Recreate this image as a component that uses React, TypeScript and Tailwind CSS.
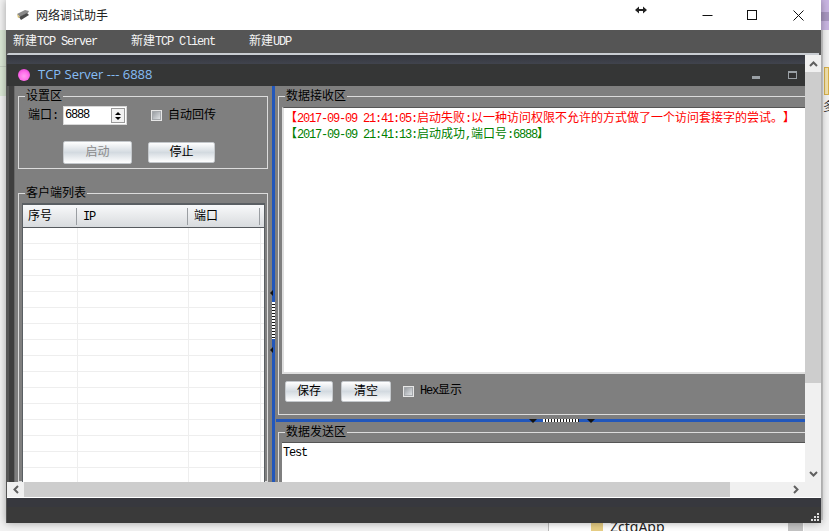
import React from 'react';

const Lat = ({ children }: { children: React.ReactNode }) => (
  <span className="text-[12px] tracking-[-1.2px]">{children}</span>
);

const Legend = ({ children }: { children: React.ReactNode }) => (
  <legend className="ml-[6px] px-[1px] pt-[2px] text-[12px] leading-[16px] text-black">{children}</legend>
);

const WinButton = ({ children, className }: { children: React.ReactNode; className: string }) => (
  <div className={`flex items-center justify-center rounded-[2px] border border-[#c4c8cc] bg-linear-to-b from-white via-[#d3dae0] to-white text-[12px] text-black ${className}`}>
    {children}
  </div>
);

const CheckBox = () => (
  <div className="flex h-[11px] w-[11px] items-center justify-center border border-[#e6e6e6] bg-[#a5a8ac]">
    <div className="h-[7px] w-[7px] bg-linear-to-br from-[#9a9ea3] to-[#dfe2e5]" />
  </div>
);

const rows = Array.from({ length: 16 });

export default function App() {
  return (
    <div className="relative h-[531px] w-[829px] overflow-hidden bg-[#f2f2f2] font-['Liberation_Mono','Noto_Sans_CJK_SC',monospace] text-[12px] [text-spacing-trim:space-all]">
      {/* desktop behind the window */}
      <div className="absolute left-0 top-[30px] h-[66px] w-[6px] bg-[#dbe8d5]" />
      <div className="absolute left-0 top-[66px] h-px w-[6px] bg-[#c8d2c4]" />
      <div className="absolute right-0 top-0 h-[30px] w-[8px] bg-[#c9b5e2]" />
      <div className="absolute right-0 top-[12px] h-[9px] w-[8px] bg-[#a896c0]" />
      <div className="absolute left-[821px] top-[30px] h-[490px] w-[2px] bg-[#cfcfcf]" />
      <div className="absolute right-0 top-[67px] h-[28px] w-[5px] border border-[#d8b14a] bg-[#f1e2ae]" />
      <div className="absolute right-0 top-[99px] w-[6px] overflow-hidden text-[12px] text-[#333]">多</div>
      <div className="absolute left-[548px] top-[523px] h-[8px] w-px bg-[#bbb]" />
      <div className="absolute left-[549px] top-[523px] h-[8px] w-[255px] bg-white" />
      <div className="absolute left-[788px] top-[523px] h-[8px] w-[15px] bg-[#c4c4c4]" />
      <div className="absolute left-[591px] top-[523px] h-[8px] w-[12px] bg-[#e8cf85]" />
      <div className="absolute left-[610px] top-[516px] font-['Noto_Sans',sans-serif] text-[14px] text-[#222]">ZctqApp</div>

      {/* main window */}
      <div className="absolute left-[6px] top-0 flex h-[523px] w-[815px] flex-col bg-[#555] shadow-[0_0_8px_rgba(0,0,0,0.35)]">
        <div className="flex h-[30px] items-center bg-white">
          <svg width="14" height="12" viewBox="0 0 14 12" className="ml-[10px]">
            <path d="M1 5 L9 1 L13 2 L12 4 L4 8 Z" fill="#8a8a8a" />
            <path d="M3 8 L11 4 L13 6 L5 11 Z" fill="#4a4a4a" />
            <path d="M1 5 L4 8 L2 9 Z" fill="#d8c070" />
          </svg>
          <span className="ml-[6px] font-['Noto_Sans_CJK_SC',sans-serif] text-[12px] text-[#222]">网络调试助手</span>
          <div className="flex-1" />
          <svg width="12" height="8" viewBox="0 0 12 8" className="mb-[10px] mr-[55px]">
            <path d="M0 4 L4 0.5 V3 H8 V0.5 L12 4 L8 7.5 V5 H4 V7.5 Z" fill="#222" />
          </svg>
          <svg width="11" height="11" viewBox="0 0 11 11" className="mr-[34px]">
            <path d="M0.5 5.5 H10.5" stroke="#111" />
          </svg>
          <svg width="10" height="10" viewBox="0 0 10 10" className="mr-[36px]">
            <rect x="0.5" y="0.5" width="9" height="9" fill="none" stroke="#111" />
          </svg>
          <svg width="11" height="11" viewBox="0 0 11 11" className="mr-[17px]">
            <path d="M0.5 0.5 L10.5 10.5 M10.5 0.5 L0.5 10.5" stroke="#111" />
          </svg>
        </div>

        <div className="flex h-[23px] items-center bg-[#555] pl-[7px] text-[#f4f4f4]">
          <span className="w-[118px]">新建<Lat>TCP Server</Lat></span>
          <span className="w-[118px]">新建<Lat>TCP Client</Lat></span>
          <span>新建<Lat>UDP</Lat></span>
        </div>

        <div className="ml-px h-[2px] w-[812px] rounded-tl-[4px] bg-[#c9cdd2]" />

        <div className="flex h-[427px]">
          {/* mdi child window */}
          <div className="ml-px flex w-[798px] flex-col overflow-hidden bg-[#7f7f7f]">
            <div className="h-[9px] shrink-0 bg-linear-to-b from-[#34363d] to-[#41444e]" />
            <div className="flex h-[22px] shrink-0 items-center bg-[#353636]">
              <div className="ml-[11px] h-[12px] w-[12px] rounded-full bg-[radial-gradient(circle_at_50%_60%,#ff9cf0,#ff70ea_45%,#e030d0)]" />
              <span className="ml-[8px] font-['Open_Sans',sans-serif] text-[13px] text-[#86bdf5]">TCP Server --- 6888</span>
              <div className="flex-1" />
              <div className="mr-[28px] mt-[4px] h-[3px] w-[8px] bg-[#9aa0a5]" />
              <div className="mr-[8px] h-[8px] w-[9px] border border-t-2 border-[#9aa0a5] bg-[#333]" />
            </div>

            <div className="flex min-h-0 flex-1">
              <div className="flex w-[8px] shrink-0">
                <div className="w-[2px] bg-[#555]" />
                <div className="w-[5px] bg-[#3f3f3f]" />
                <div className="w-px bg-[#6a6a6a]" />
              </div>

              {/* left pane */}
              <div className="flex w-[256px] shrink-0 flex-col overflow-hidden pl-[3px] pr-[3px] pt-px">
                <fieldset className="h-[82px] shrink-0 border border-[#dcdcdc]">
                  <Legend>设置区</Legend>
                  <div className="mt-[1px] flex h-[19px] items-center pl-[9px]">
                    <span className="w-[35px] text-black">端口:</span>
                    <div className="flex h-[19px] w-[64px] items-center justify-between border border-[#d8d8d8] bg-white pl-[1px] pr-px">
                      <span className="-mt-[2px]"><Lat>6888</Lat></span>
                      <div className="flex h-[15px] w-[14px] flex-col items-center justify-center gap-[2px] border border-[#9a9a9a] bg-[#f2f2f2]">
                        <div className="h-0 w-0 border-x-[3px] border-b-[3px] border-x-transparent border-b-black" />
                        <div className="h-0 w-0 border-x-[3px] border-t-[3px] border-x-transparent border-t-black" />
                      </div>
                    </div>
                    <div className="ml-[24px] mr-[6px]"><CheckBox /></div>
                    <span className="text-black">自动回传</span>
                  </div>
                  <div className="mt-[16px] flex items-center pl-[44px]">
                    <WinButton className="h-[23px] w-[69px] border-[#a8adb2] from-[#a9aeb3] via-[#c3c8cc] to-[#a9aeb3] text-[#8a8a8a]!">启动</WinButton>
                    <WinButton className="ml-[16px] h-[21px] w-[67px]">停止</WinButton>
                  </div>
                </fieldset>

                <fieldset className="mt-[15px] min-h-0 flex-1 border border-[#dcdcdc]">
                  <Legend>客户端列表</Legend>
                  <div className="ml-[3px] mr-[2px] mt-px h-[400px] border-x border-t-2 border-[#5a5f63] bg-white">
                    <div className="flex h-[23px] items-center border-b border-[#55595d] bg-linear-to-b from-[#f8f9fa] to-[#d8dbde] text-black">
                      <div className="h-[17px] w-[54px] border-r border-[#9a9ea2] pl-[5px]">序号</div>
                      <div className="h-[17px] w-[111px] border-r border-[#9a9ea2] pl-[6px]"><Lat>IP</Lat></div>
                      <div className="h-[17px] w-[72px] border-r border-[#9a9ea2] pl-[6px]">端口</div>
                    </div>
                    {rows.map((_, i) => (
                      <div key={i} className="flex h-[16px] border-b border-[#eeeeee]">
                        <div className="w-[55px] border-r border-[#eeeeee]" />
                        <div className="w-[111px] border-r border-[#eeeeee]" />
                        <div className="w-[72px] border-r border-[#eeeeee]" />
                      </div>
                    ))}
                  </div>
                </fieldset>
              </div>

              {/* vertical splitter */}
              <div className="flex w-[5px] shrink-0 flex-col items-start bg-[#7f7f7f]">
                <div className="relative ml-px h-full w-[3px] bg-[#2257bb]">
                  <div className="absolute -left-[2px] top-[204px] h-0 w-0 border-y-[3px] border-r-[3px] border-y-transparent border-r-[#111]" />
                  <div className="absolute left-0 top-[216px] h-[37px] w-[3px] bg-[repeating-linear-gradient(to_bottom,#fff_0,#fff_2px,#111_2px,#111_3px)]" />
                  <div className="absolute -left-[2px] top-[261px] h-0 w-0 border-y-[3px] border-r-[3px] border-y-transparent border-r-[#111]" />
                </div>
              </div>

              {/* right pane */}
              <div className="flex min-w-0 flex-1 flex-col overflow-hidden">
                <div className="h-[333px] shrink-0 pl-[2px] pt-px">
                  <fieldset className="-mr-[10px] h-[328px] border border-[#dcdcdc]">
                    <Legend>数据接收区</Legend>
                    <div className="ml-[3px] mt-[2px] h-[267px] border-b-2 border-l-2 border-t border-[#dedede] border-t-[#555] bg-white pl-px pt-[3px] leading-[16px]">
                      <div className="whitespace-nowrap text-[#f00]">【<Lat>2017-09-09 21:41:05:</Lat>启动失败<Lat>:</Lat>以一种访问权限不允许的方式做了一个访问套接字的尝试。】</div>
                      <div className="whitespace-nowrap text-[#008000]">【<Lat>2017-09-09 21:41:13:</Lat>启动成功<Lat>,</Lat>端口号<Lat>:6888</Lat>】</div>
                    </div>
                    <div className="mt-[7px] flex items-center pl-[6px]">
                      <WinButton className="h-[21px] w-[48px]">保存</WinButton>
                      <WinButton className="ml-[8px] h-[21px] w-[50px]">清空</WinButton>
                      <div className="ml-[12px] mr-[6px]"><CheckBox /></div>
                      <span className="-mt-[2px] text-black"><Lat>Hex</Lat>显示</span>
                    </div>
                  </fieldset>
                </div>

                {/* horizontal splitter */}
                <div className="relative h-[3px] shrink-0 bg-[#2257bb]">
                  <div className="absolute left-[253px] top-0 h-0 w-0 border-x-[4px] border-t-[4px] border-x-transparent border-t-[#111]" />
                  <div className="absolute left-[267px] top-0 h-[3px] w-[36px] bg-[repeating-linear-gradient(to_right,#fff_0,#fff_2px,#111_2px,#111_3px)]" />
                  <div className="absolute left-[311px] top-0 h-0 w-0 border-x-[4px] border-t-[4px] border-x-transparent border-t-[#111]" />
                </div>

                <div className="min-h-0 flex-1 pl-[2px] pt-px">
                  <fieldset className="-mr-[10px] h-[100px] border border-[#dcdcdc]">
                    <Legend>数据发送区</Legend>
                    <div className="ml-[3px] mt-px h-[80px] border-t border-[#555] bg-white pl-px pt-px text-black">
                      <Lat>Test</Lat>
                    </div>
                  </fieldset>
                </div>
              </div>
            </div>
          </div>

          {/* vertical scrollbar */}
          <div className="flex w-[16px] flex-col items-center bg-[#f0f0f0]">
            <div className="flex h-[17px] items-center">
              <svg width="9" height="6" viewBox="0 0 9 6"><path d="M1 5 L4.5 1.5 L8 5" fill="none" stroke="#606060" strokeWidth="2" /></svg>
            </div>
            <div className="h-[311px] w-full bg-[#cdcdcd]" />
            <div className="flex-1" />
            <div className="flex h-[17px] items-center">
              <svg width="9" height="6" viewBox="0 0 9 6"><path d="M1 1 L4.5 4.5 L8 1" fill="none" stroke="#606060" strokeWidth="2" /></svg>
            </div>
          </div>
        </div>

        {/* horizontal scrollbar */}
        <div className="ml-px flex h-[15px] items-center bg-[#f0f0f0]">
          <div className="flex w-[17px] justify-center">
            <svg width="6" height="9" viewBox="0 0 6 9"><path d="M5 1 L1.5 4.5 L5 8" fill="none" stroke="#606060" strokeWidth="2" /></svg>
          </div>
          <div className="h-full w-[706px] bg-[#cdcdcd]" />
          <div className="flex-1" />
          <div className="mr-[22px]">
            <svg width="6" height="9" viewBox="0 0 6 9"><path d="M1 1 L4.5 4.5 L1 8" fill="none" stroke="#606060" strokeWidth="2" /></svg>
          </div>
        </div>
        <div className="ml-px h-px bg-white" />

        {/* status bar */}
        <div className="relative ml-px flex flex-1 items-end justify-end bg-linear-to-b from-[#37383e] from-[36%] to-[#3a3a3a] to-[36%] pb-px pr-px">
          <svg width="10" height="10" viewBox="0 0 10 10">
            <path d="M7 1 h2 v2 h-2 Z M4 4 h2 v2 h-2 Z M7 4 h2 v2 h-2 Z M1 7 h2 v2 h-2 Z M4 7 h2 v2 h-2 Z M7 7 h2 v2 h-2 Z" fill="#dddddd" />
          </svg>
        </div>
      </div>
    </div>
  );
}
